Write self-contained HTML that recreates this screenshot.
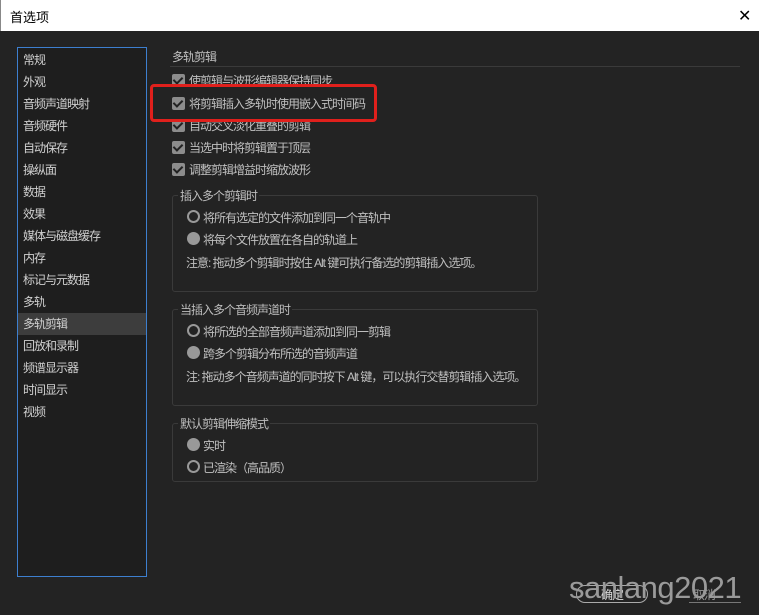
<!DOCTYPE html>
<html><head><meta charset="utf-8"><style>
*{margin:0;padding:0;box-sizing:border-box}
body{width:759px;height:615px;background:#232323;font-family:"Liberation Sans","Noto Sans CJK SC",sans-serif;font-size:12px;color:#c8c8c8;position:relative;overflow:hidden;letter-spacing:-1px}
.a{position:absolute}
.title{left:0;top:0;width:759px;height:31px;background:#fff;color:#000;font-size:13px;padding:7px 0 0 9px;border-left:1px solid #888;letter-spacing:0}
.side{left:17px;top:47px;width:130px;height:530px;border:1px solid #3d7fcf;background:#1e1e1e}
.side div{height:22px;line-height:22px;padding-left:5px;color:#d0d0d0;font-size:12px}
.side .sel{background:#3d3d3d}
.cb{width:13px;height:13px;background:#8c8c8c;border-radius:2px}
.cb:after{content:"";position:absolute;left:3px;top:1px;width:4px;height:7px;border:solid #222;border-width:0 2px 2px 0;transform:rotate(45deg)}
.grp{border:1px solid #3a3a3a;border-radius:3px;left:172px;width:366px}
.gl{background:#232323;padding:0 2px;font-size:12px;color:#bdbdbd}
.ro{width:13px;height:13px;border-radius:50%;border:2px solid #999}
.rf{width:13px;height:13px;border-radius:50%;background:#999}
.t{font-size:12px;color:#c0c0c0;white-space:nowrap}
</style></head><body>
<div class="a title">首选项</div>
<div class="a" style="left:738px;top:6px;font-size:16px;color:#000">✕</div>
<div class="a side">
<div style="margin-top:1px">常规</div><div>外观</div><div>音频声道映射</div><div>音频硬件</div><div>自动保存</div><div>操纵面</div><div>数据</div><div>效果</div><div>媒体与磁盘缓存</div><div>内存</div><div>标记与元数据</div><div>多轨</div><div class="sel">多轨剪辑</div><div>回放和录制</div><div>频谱显示器</div><div>时间显示</div><div>视频</div>
</div>
<div class="a t" style="left:172px;top:48px">多轨剪辑</div>
<div class="a" style="left:170px;top:66px;width:570px;height:1px;background:#3a3a3a"></div>
<div class="a cb" style="left:172px;top:74px"></div><div class="a t" style="left:189px;top:72px">使剪辑与波形编辑器保持同步</div>
<div class="a cb" style="left:172px;top:97px"></div><div class="a t" style="left:189px;top:95px">将剪辑插入多轨时使用嵌入式时间码</div>
<div class="a cb" style="left:172px;top:119px"></div><div class="a t" style="left:189px;top:117px">自动交叉淡化重叠的剪辑</div>
<div class="a cb" style="left:172px;top:141px"></div><div class="a t" style="left:189px;top:139px">当选中时将剪辑置于顶层</div>
<div class="a cb" style="left:172px;top:163px"></div><div class="a t" style="left:189px;top:161px">调整剪辑增益时缩放波形</div>
<div class="a" style="left:150px;top:84px;width:227px;height:38px;border:3px solid #e0201c;border-radius:4px"></div>

<div class="a grp" style="top:195px;height:97px"></div>
<div class="a gl" style="left:178px;top:187px">插入多个剪辑时</div>
<div class="a ro" style="left:187px;top:210px"></div><div class="a t" style="left:203px;top:209px">将所有选定的文件添加到同一个音轨中</div>
<div class="a rf" style="left:187px;top:232px"></div><div class="a t" style="left:203px;top:231px">将每个文件放置在各自的轨道上</div>
<div class="a t" style="left:186px;top:254px">注意: 拖动多个剪辑时按住 Alt 键可执行备选的剪辑插入选项。</div>

<div class="a grp" style="top:309px;height:97px"></div>
<div class="a gl" style="left:178px;top:301px">当插入多个音频声道时</div>
<div class="a ro" style="left:187px;top:324px"></div><div class="a t" style="left:203px;top:323px">将所选的全部音频声道添加到同一剪辑</div>
<div class="a rf" style="left:187px;top:346px"></div><div class="a t" style="left:203px;top:345px">跨多个剪辑分布所选的音频声道</div>
<div class="a t" style="left:186px;top:368px">注: 拖动多个音频声道的同时按下 Alt 键，可以执行交替剪辑插入选项。</div>

<div class="a grp" style="top:423px;height:59px"></div>
<div class="a gl" style="left:178px;top:415px">默认剪辑伸缩模式</div>
<div class="a rf" style="left:187px;top:438px"></div><div class="a t" style="left:203px;top:437px">实时</div>
<div class="a ro" style="left:187px;top:460px"></div><div class="a t" style="left:203px;top:459px">已渲染（高品质）</div>

<div class="a" style="left:576px;top:585px;width:72px;height:18px;border:1px solid #aaa;border-radius:9px"></div>
<div class="a t" style="left:601px;top:586px;color:#ddd">确定</div>
<div class="a" style="left:689px;top:585px;width:52px;height:18px;border-bottom:1px solid #777"></div>
<div class="a t" style="left:693px;top:586px;color:#999">取消</div>
<div class="a" style="left:569px;top:570px;font-size:31px;color:#9a9a9a;font-family:'Liberation Sans',sans-serif;letter-spacing:-0.5px">sanlang2021</div>
</body></html>
